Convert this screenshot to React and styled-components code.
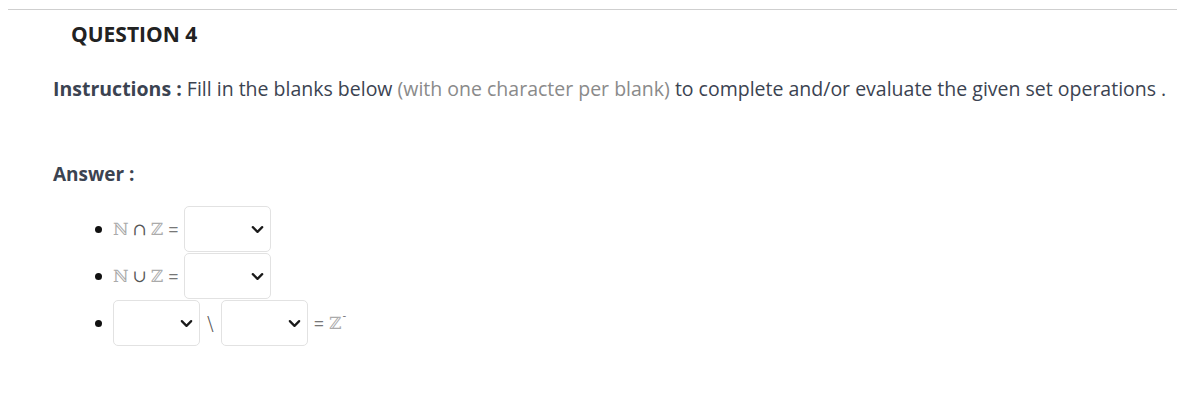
import React from "react";
import styled, { createGlobalStyle } from "styled-components";

const GlobalStyle = createGlobalStyle`
  html, body {
    margin: 0;
    padding: 0;
    background: #fff;
  }
  body {
    font-family: "Open Sans", "Liberation Sans", sans-serif;
  }
`;

const Page = styled.div`
  padding: 9px 0 0 8px;
`;

const Rule = styled.div`
  height: 1px;
  background: #cfcfcf;
`;

const Title = styled.h2`
  margin: 11px 0 0 63px;
  font-size: 21px;
  font-weight: 700;
  color: #222;
  line-height: 26px;
`;

const Body = styled.div`
  padding-left: 45px;
  color: #3b4351;
`;

const Instructions = styled.p`
  margin: 29px 0 0;
  font-size: 19.5px;
  line-height: 26px;
`;

const Muted = styled.span`
  color: #8a8a8a;
`;

const Heading = styled.p`
  margin: 59px 0 0;
  font-size: 19px;
  font-weight: 700;
  line-height: 26px;
`;

const List = styled.ul`
  margin: 19px 0 0;
  padding: 0 0 0 60px;
  display: flex;
  flex-direction: column;
  gap: 1px;
`;

const Item = styled.li`
  display: flex;
  align-items: center;
  height: 46px;
  position: relative;
  list-style: none;

  &::before {
    content: "";
    position: absolute;
    left: -18px;
    top: 50%;
    width: 7px;
    height: 7px;
    margin-top: -3px;
    border-radius: 50%;
    background: #111;
  }
`;

const Math = styled.span`
  display: inline-flex;
  align-items: center;
  font-family: "DejaVu Serif", "Liberation Serif", serif;
  font-size: 17px;
  color: ${(p) => (p.$dark ? "#555" : "#aaa")};
  margin: ${(p) => p.$m || "0 4px 0 0"};
  position: relative;
`;

const Minus = styled.span`
  position: relative;
  top: -7px;
  font-size: 11px;
  color: #777;
  margin-left: 1px;
`;

const Eq = styled.span`
  font-family: "Open Sans", sans-serif;
  font-size: 18px;
  color: #777;
  margin: ${(p) => p.$m || "0 5px 0 1px"};
`;

const Select = styled.div`
  width: 87px;
  height: 46px;
  box-sizing: border-box;
  border: 1px solid #e2e2e2;
  border-radius: 5px;
  display: flex;
  align-items: center;
  justify-content: flex-end;
  padding-right: 5px;
  background: #fff;
`;

const Slash = styled.span`
  font-family: "DejaVu Sans", sans-serif;
  font-weight: 300;
  font-size: 20px;
  color: #555;
  margin: 0 7px;
`;

const Chevron = () => (
  <svg width="15" height="15" viewBox="0 0 16 16">
    <path
      d="M3 5.5l5 5 5-5"
      fill="none"
      stroke="#1a1a1a"
      strokeWidth="2.4"
      strokeLinecap="round"
      strokeLinejoin="round"
    />
  </svg>
);

const Dropdown = () => (
  <Select>
    <Chevron />
  </Select>
);

const App = () => (
  <>
    <GlobalStyle />
    <Page>
      <Rule />
      <Title>QUESTION 4</Title>
      <Body>
        <Instructions>
          <b>Instructions :</b> Fill in the blanks below{" "}
          <Muted>(with one character per blank)</Muted> to complete and/or
          evaluate the given set operations .
        </Instructions>
        <Heading>Answer :</Heading>
        <List>
          <Item>
            <Math>ℕ</Math>
            <Math $dark>∩</Math>
            <Math>ℤ</Math>
            <Eq>=</Eq>
            <Dropdown />
          </Item>
          <Item>
            <Math>ℕ</Math>
            <Math $dark>∪</Math>
            <Math>ℤ</Math>
            <Eq>=</Eq>
            <Dropdown />
          </Item>
          <Item>
            <Dropdown />
            <Slash>\</Slash>
            <Dropdown />
            <Eq $m="0 5px 0 6px">=</Eq>
            <Math $m="0">
              ℤ<Minus>-</Minus>
            </Math>
          </Item>
        </List>
      </Body>
    </Page>
  </>
);

export default App;
